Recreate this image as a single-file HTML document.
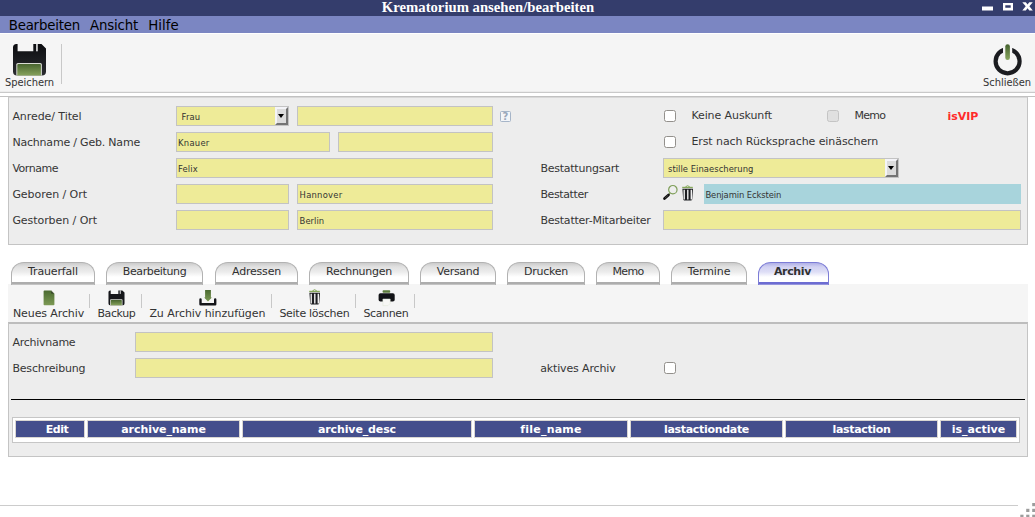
<!DOCTYPE html>
<html lang="de">
<head>
<meta charset="utf-8">
<title>Krematorium ansehen/bearbeiten</title>
<style>
html,body{margin:0;padding:0;}
body{width:1035px;height:517px;position:relative;overflow:hidden;background:#fff;
 font-family:"DejaVu Sans","Liberation Sans",sans-serif;font-size:11px;color:#222;}
.abs{position:absolute;}
#titlebar{left:0;top:0;width:1035px;height:16px;background:#343d6c;}
#title{left:0;top:-1px;width:976px;text-align:center;color:#fff;font-family:"Liberation Serif",serif;font-weight:bold;font-size:14.7px;line-height:16px;white-space:nowrap;}
#menubar{left:0;top:16px;width:1035px;height:17px;background:#7b86c2;}
.menu{top:17px;font-size:13.33px;line-height:17px;color:#000;white-space:nowrap;}
#toolbar{left:0;top:34px;width:1035px;height:58px;background:#f5f5f5;}
.tlabel{font-size:11px;line-height:13px;white-space:nowrap;color:#333;}
.cond{font-family:"DejaVu Sans Condensed","DejaVu Sans","Liberation Sans",sans-serif;font-stretch:condensed;}
.vip{font-size:11px;line-height:13px;font-weight:bold;color:#ff2a2a;white-space:nowrap;}
.vsep{width:1px;background:#c8c8c8;}
.panel{background:#ededed;border:1px solid #c4c4c4;box-sizing:border-box;}
.lbl{font-size:11px;line-height:14px;white-space:nowrap;color:#363636;}
.inp{box-sizing:border-box;height:20px;background:#eeeb98;border:1px solid #c3c3c3;font-family:"DejaVu Sans Condensed","DejaVu Sans","Liberation Sans",sans-serif;font-stretch:condensed;font-size:9.33px;line-height:18px;padding-left:2px;padding-top:1px;color:#333;white-space:nowrap;}
.cb{box-sizing:border-box;width:12px;height:12px;border:1px solid #93908c;border-radius:2.5px;background:#fff;}
.cb.dis{background:#e0e0e0;border-color:#c4c4c4;}
.ddbtn{box-sizing:border-box;width:13px;height:18px;background:#dcdcdc;border:2px solid;border-color:#f4f4f8 #747474 #747474 #f4f4f8;}
.ddbtn:after{content:"";position:absolute;left:1px;top:5px;border:3.5px solid transparent;border-top:4px solid #000;border-bottom:0;}
.tab{z-index:2;top:262px;height:23px;box-sizing:border-box;border:1px solid #b2b2b2;border-bottom:0;border-radius:13px 13px 0 0 / 12px 12px 0 0;
 background:linear-gradient(#cbcbcb 0,#e1e1e1 4px,#ececec 9px,#ffffff 14px,#ffffff 19px,#adadad 19px,#adadad 21px,#c3c3c3 21px,#c3c3c3 22px);text-align:center;font-size:11px;line-height:18px;color:#303030;white-space:nowrap;}
.tab.act{border-color:#7c7cd6;background:linear-gradient(#b0b0e6 0,#d2d2f2 4px,#dedef6 9px,#ffffff 14px,#ffffff 19px,#6c6cd2 19px,#6c6cd2 21px,#9595dc 21px,#9595dc 22px);font-weight:bold;}
.th{top:420px;height:18px;box-sizing:border-box;border:1px solid #d9d6d2;background:#444e8c;color:#fff;font-weight:bold;font-size:11px;line-height:17px;text-align:center;white-space:nowrap;}
</style>
</head>
<body>
<!-- title bar -->
<div id="titlebar" class="abs"></div>
<div id="title" class="abs">Krematorium ansehen/bearbeiten</div>
<svg class="abs" style="left:978px;top:0" width="57" height="16" viewBox="0 0 57 16">
 <rect x="4" y="6.5" width="11" height="4" fill="#fff"/>
 <path d="M25 3h10v7.5h-10z M27.3 5.2v2.6h5.4v-2.6z" fill="#fff" fill-rule="evenodd"/>
 <path d="M44.3 2.3H47.8L49.55 4.5 51.3 2.3H54.8L51.4 6.3 54.8 10.4H51.3L49.55 8.2 47.8 10.4H44.3L47.7 6.3z" fill="#fff"/>
</svg>
<!-- menu bar -->
<div id="menubar" class="abs"></div>
<div class="abs menu" style="left:8.7px;letter-spacing:-0.20px">Bearbeiten</div>
<div class="abs menu" style="left:90.0px;letter-spacing:-0.15px">Ansicht</div>
<div class="abs menu" style="left:148.2px;letter-spacing:0.07px">Hilfe</div>
<!-- main toolbar -->
<div id="toolbar" class="abs"></div>
<div class="abs" style="left:0;top:91px;width:1035px;height:1px;background:#ececec"></div>
<div class="abs" style="left:0;top:92px;width:1035px;height:1px;background:#c9c9c9"></div>
<svg class="abs" style="left:12px;top:43px" width="35" height="34" viewBox="0 0 35 34">
 <defs>
  <linearGradient id="gg" x1="0" y1="0" x2="0" y2="1"><stop offset="0" stop-color="#48652f"/><stop offset="1" stop-color="#86a25c"/></linearGradient>
  <linearGradient id="bk" x1="0" y1="0" x2="0" y2="1"><stop offset="0" stop-color="#0c0d10"/><stop offset="1" stop-color="#2a2c30"/></linearGradient>
 </defs>
 <path d="M4.5 1H5.6V8.3H21.3V1H29.5L34 5.5V28.5a4 4 0 0 1-4 4H5a4 4 0 0 1-4-4V4.5A3.5 3.5 0 0 1 4.5 1z" fill="url(#bk)"/>
 <rect x="24.2" y="1" width="1.5" height="7.3" fill="#f5f5f5"/>
 <path d="M4.3 32.5v-11a1.6 1.6 0 0 1 1.6-1.6h22.4a1.6 1.6 0 0 1 1.6 1.6v11z" fill="#d9dcd4"/>
 <path d="M5.3 32.5v-10.4a1.2 1.2 0 0 1 1.2-1.2h21.2a1.2 1.2 0 0 1 1.2 1.2v10.4z" fill="url(#gg)"/>
</svg>
<div class="abs tlabel cond" style="left:5.0px;top:76px;letter-spacing:-0.04px">Speichern</div>
<div class="abs vsep" style="left:61px;top:44px;height:40px"></div>
<svg class="abs" style="left:990px;top:42px" width="36" height="36" viewBox="0 0 36 36">
 <defs>
  <linearGradient id="pg" x1="0" y1="0" x2="0" y2="1"><stop offset="0" stop-color="#43602c"/><stop offset="1" stop-color="#8aa860"/></linearGradient>
 </defs>
 <circle cx="17.6" cy="19.3" r="12" fill="none" stroke="#1b1c20" stroke-width="4.2"/>
 <rect x="13" y="2" width="9.2" height="11" fill="#f5f5f5"/>
 <rect x="15.3" y="2.3" width="4.6" height="15.8" rx="2.3" fill="url(#pg)"/>
</svg>
<div class="abs tlabel cond" style="left:983.0px;top:76px;letter-spacing:-0.02px">Schließen</div>

<!-- top panel -->
<div class="abs panel" style="left:8px;top:96px;width:1020px;height:149px;border-top-width:2px;border-top-color:#d8d8d8"></div>
<div class="abs" style="left:0;top:96px;width:1035px;height:1px;background:#c1c1c1"></div>
<div class="abs lbl" style="left:12.4px;top:110px;letter-spacing:-0.07px">Anrede/ Titel</div>
<div class="abs lbl" style="left:12.4px;top:136px;letter-spacing:-0.20px">Nachname / Geb. Name</div>
<div class="abs lbl" style="left:12.4px;top:162px;letter-spacing:-0.48px">Vorname</div>
<div class="abs lbl" style="left:12.4px;top:188px;letter-spacing:-0.05px">Geboren / Ort</div>
<div class="abs lbl" style="left:12.4px;top:214px;letter-spacing:-0.06px">Gestorben / Ort</div>

<div class="abs inp" style="left:176px;top:106px;width:113px;letter-spacing:0.18px;padding-left:4.6px">Frau</div>
<div class="abs ddbtn" style="left:275px;top:107px"></div>
<div class="abs inp" style="left:297px;top:106px;width:196px"></div>
<div class="abs" style="left:500px;top:111px;width:11px;height:11px;box-sizing:border-box;border:1px solid #a6b5c8;border-radius:1.5px;background:#f3f5f8;color:#9aa8ba;font-size:10px;font-weight:bold;line-height:9px;text-align:center;overflow:hidden">?</div>
<div class="abs inp" style="left:176px;top:132px;width:154px;letter-spacing:0.28px;padding-left:1.0px">Knauer</div>
<div class="abs inp" style="left:338px;top:132px;width:155px"></div>
<div class="abs inp" style="left:176px;top:158px;width:317px;letter-spacing:0.17px;padding-left:1.0px">Felix</div>
<div class="abs inp" style="left:176px;top:184px;width:113px"></div>
<div class="abs inp" style="left:297px;top:184px;width:196px;letter-spacing:0.25px;padding-left:1.6px">Hannover</div>
<div class="abs inp" style="left:176px;top:210px;width:113px"></div>
<div class="abs inp" style="left:297px;top:210px;width:196px;letter-spacing:0.04px;padding-left:1.6px">Berlin</div>

<div class="abs cb" style="left:664px;top:110px"></div>
<div class="abs lbl" style="left:691.4px;top:109px;letter-spacing:-0.09px">Keine Auskunft</div>
<div class="abs cb dis" style="left:827px;top:110px"></div>
<div class="abs lbl" style="left:854.4px;top:109px;letter-spacing:-0.68px">Memo</div>
<div class="abs vip" style="left:947.4px;top:110px;letter-spacing:0.00px">isVIP</div>
<div class="abs cb" style="left:664px;top:136px"></div>
<div class="abs lbl" style="left:691.4px;top:135px;letter-spacing:-0.08px">Erst nach Rücksprache einäschern</div>

<div class="abs lbl" style="left:540.4px;top:162px;letter-spacing:-0.24px">Bestattungsart</div>
<div class="abs lbl" style="left:540.4px;top:188px;letter-spacing:-0.38px">Bestatter</div>
<div class="abs lbl" style="left:540.4px;top:214px;letter-spacing:-0.22px">Bestatter-Mitarbeiter</div>
<div class="abs inp" style="left:663px;top:158px;width:236px;letter-spacing:0.04px;padding-left:4.0px">stille Einaescherung</div>
<div class="abs ddbtn" style="left:885px;top:159px"></div>
<div class="abs inp" style="left:704px;top:184px;width:317px;background:#a8d4dc;border-color:#a8d4dc;letter-spacing:-0.09px;padding-left:0.4px">Benjamin Eckstein</div>
<div class="abs inp" style="left:663px;top:210px;width:358px"></div>
<!-- search + trash icons -->
<svg class="abs" style="left:662px;top:184px" width="18" height="18" viewBox="0 0 18 18">
 <circle cx="10.85" cy="5.7" r="4.2" fill="none" stroke="#7f9f5a" stroke-width="1.2"/>
 <path d="M8.1 8.9L6.9 10.6" stroke="#7f9f5a" stroke-width="1.2"/>
 <path d="M6.5 11L2.5 14.6" stroke="#111" stroke-width="2.7" stroke-linecap="round"/>
 <path d="M5.6 11.7l-.9.8M4.3 12.9l-.9.8" stroke="#888" stroke-width=".7"/>
</svg>
<svg class="abs" style="left:681px;top:184px" width="14" height="18" viewBox="0 0 14 18">
 <path d="M4.4 2.9Q6.6 .5 8.8 2.9" fill="none" stroke="#86a85c" stroke-width="1"/>
 <rect x="1.2" y="2.8" width="10.6" height="1.3" fill="#86a85c"/>
 <path d="M1.4 4.8H12L11.2 15.6a1 1 0 0 1-1 .8H3.2a1 1 0 0 1-1-.8z" fill="#1d1e22"/>
 <path d="M3.2 5.8v9.6M6.8 5.8v9.6M10.3 5.8v9.6" stroke="#f2f2f2" stroke-width="1.4"/>
</svg>

<!-- tabs -->
<div class="abs tab" style="left:11px;width:84px;letter-spacing:-0.16px">Trauerfall</div>
<div class="abs tab" style="left:106px;width:97px;letter-spacing:-0.37px">Bearbeitung</div>
<div class="abs tab" style="left:215px;width:83px;letter-spacing:-0.20px">Adressen</div>
<div class="abs tab" style="left:309px;width:100px;letter-spacing:-0.26px">Rechnungen</div>
<div class="abs tab" style="left:420px;width:76px;letter-spacing:-0.28px">Versand</div>
<div class="abs tab" style="left:507px;width:78px;letter-spacing:-0.25px">Drucken</div>
<div class="abs tab" style="left:596px;width:64px;letter-spacing:-0.68px">Memo</div>
<div class="abs tab" style="left:671px;width:76px;letter-spacing:-0.12px">Termine</div>
<div class="abs tab act" style="left:758px;width:71px;padding-right:2px;letter-spacing:-0.34px">Archiv</div>

<!-- sub toolbar -->
<div class="abs" style="left:8px;top:284px;width:1020px;height:39px;background:#f5f5f5"></div>
<div class="abs tlabel" style="left:13.0px;top:307px;letter-spacing:-0.11px">Neues Archiv</div>
<div class="abs vsep" style="left:89px;top:294px;height:14px"></div>
<div class="abs tlabel" style="left:97.4px;top:307px;letter-spacing:-0.39px">Backup</div>
<div class="abs vsep" style="left:141px;top:294px;height:14px"></div>
<div class="abs tlabel" style="left:149.4px;top:307px;letter-spacing:-0.06px">Zu Archiv hinzufügen</div>
<div class="abs vsep" style="left:271px;top:294px;height:14px"></div>
<div class="abs tlabel" style="left:279.4px;top:307px;letter-spacing:-0.28px">Seite löschen</div>
<div class="abs vsep" style="left:355px;top:294px;height:14px"></div>
<div class="abs tlabel" style="left:363.4px;top:307px;letter-spacing:-0.35px">Scannen</div>
<div class="abs vsep" style="left:414px;top:294px;height:14px"></div>
<!-- sub toolbar icons -->
<svg class="abs" style="left:41px;top:290px" width="16" height="16" viewBox="0 0 16 16">
 <defs><linearGradient id="g2" x1="0" y1="0" x2="0" y2="1"><stop offset="0" stop-color="#4a6a30"/><stop offset="1" stop-color="#7d9a55"/></linearGradient></defs>
 <path d="M3.4 .5h7l3 3v11a.8.8 0 0 1-.8.8h-9.2a.8.8 0 0 1-.8-.8v-13.2a.8.8 0 0 1 .8-.8z" fill="url(#g2)"/>
 <path d="M10.4 .6v3h3z" fill="#2a3620"/>
 <path d="M10.4 .6l3 3" stroke="#e8eee0" stroke-width=".8"/>
</svg>
<svg class="abs" style="left:108px;top:290px" width="17" height="16" viewBox="0 0 35 34" preserveAspectRatio="none">
 <path d="M4.5 1H5.6V8.3H21.3V1H29.5L34 5.5V28.5a4 4 0 0 1-4 4H5a4 4 0 0 1-4-4V4.5A3.5 3.5 0 0 1 4.5 1z" fill="#15161a"/>
 <rect x="24.2" y="1" width="1.9" height="7.3" fill="#f5f5f5"/>
 <path d="M4.3 32.5v-11a1.6 1.6 0 0 1 1.6-1.6h22.4a1.6 1.6 0 0 1 1.6 1.6v11z" fill="#d9dcd4"/>
 <path d="M5.8 32.5v-10a1.2 1.2 0 0 1 1.2-1.2h20.2a1.2 1.2 0 0 1 1.2 1.2v10z" fill="url(#gg)"/>
</svg>
<svg class="abs" style="left:199px;top:290px" width="18" height="16" viewBox="0 0 18 16">
 <path d="M6.1 0h5.8v7.6h1l-3.9 4-3.9-4h1z" fill="url(#g2)"/>
 <path d="M1.5 9.4V14.2H16.2V9.4" fill="none" stroke="#15161a" stroke-width="2.4" stroke-linejoin="round" stroke-linecap="round"/>
</svg>
<svg class="abs" style="left:308px;top:288px" width="14" height="18" viewBox="0 0 14 18">
 <path d="M4.4 2.9Q6.6 .5 8.8 2.9" fill="none" stroke="#86a85c" stroke-width="1"/>
 <rect x="1.2" y="2.8" width="10.6" height="1.3" fill="#86a85c"/>
 <path d="M1.4 4.8H12L11.2 15.6a1 1 0 0 1-1 .8H3.2a1 1 0 0 1-1-.8z" fill="#1d1e22"/>
 <path d="M3.2 5.8v9.6M6.8 5.8v9.6M10.3 5.8v9.6" stroke="#f2f2f2" stroke-width="1.4"/>
</svg>
<svg class="abs" style="left:378px;top:290px" width="18" height="17" viewBox="0 0 18 17">
 <rect x="4.6" y=".3" width="7.6" height="2.5" rx=".8" fill="#5c7c3c"/>
 <rect x=".6" y="3.3" width="16.1" height="8.3" rx="1.8" fill="#121317"/>
 <path d="M4.9 9h7.3v4.4l-2.2 2.2h-5.1z" fill="#f7f7f5" stroke="#dfe6d6" stroke-width=".5"/>
</svg>

<!-- lower panel -->
<div class="abs panel" style="left:8px;top:322px;width:1020px;height:135px;border-top-width:2px;border-top-color:#bdbdbd"></div>
<div class="abs lbl" style="left:12.4px;top:336px;letter-spacing:-0.26px">Archivname</div>
<div class="abs lbl" style="left:12.4px;top:362px;letter-spacing:-0.17px">Beschreibung</div>
<div class="abs inp" style="left:135px;top:332px;width:358px"></div>
<div class="abs inp" style="left:135px;top:358px;width:358px"></div>
<div class="abs lbl" style="left:540.2px;top:362px;letter-spacing:-0.14px">aktives Archiv</div>
<div class="abs cb" style="left:664px;top:362px"></div>
<div class="abs" style="left:11px;top:399px;width:1014px;height:1px;background:#000"></div>
<!-- table -->
<div class="abs" style="left:12px;top:417px;width:1008px;height:26px;box-sizing:border-box;border:1px solid #c6c6c6;background:#fff"></div>
<div class="abs th" style="left:15px;width:70px;padding-left:14px;letter-spacing:-0.46px">Edit</div>
<div class="abs th" style="left:87px;width:153px;letter-spacing:-0.06px">archive_name</div>
<div class="abs th" style="left:242px;width:230px;letter-spacing:-0.13px">archive_desc</div>
<div class="abs th" style="left:474px;width:154px;letter-spacing:0.22px">file_name</div>
<div class="abs th" style="left:630px;width:153px;letter-spacing:-0.31px">lastactiondate</div>
<div class="abs th" style="left:785px;width:153px;letter-spacing:-0.34px">lastaction</div>
<div class="abs th" style="left:940px;width:77px;letter-spacing:0.02px">is_active</div>

<!-- bottom line + grip -->
<div class="abs" style="left:0;top:505px;width:1018px;height:1px;background:#cccccc"></div>
<svg class="abs" style="left:1020px;top:503px" width="15" height="14" viewBox="0 0 15 14">
 <g fill="#9c9c9c"><rect x="12.2" y="0" width="3" height="3.2"/><rect x="6.2" y="5.8" width="3.2" height="3.2"/><rect x="12.2" y="5.8" width="3" height="3.2"/><rect x=".3" y="11.7" width="3.2" height="3"/><rect x="6.2" y="11.7" width="3.2" height="3"/><rect x="12.2" y="11.7" width="3" height="3"/></g>
</svg>
</body>
</html>
